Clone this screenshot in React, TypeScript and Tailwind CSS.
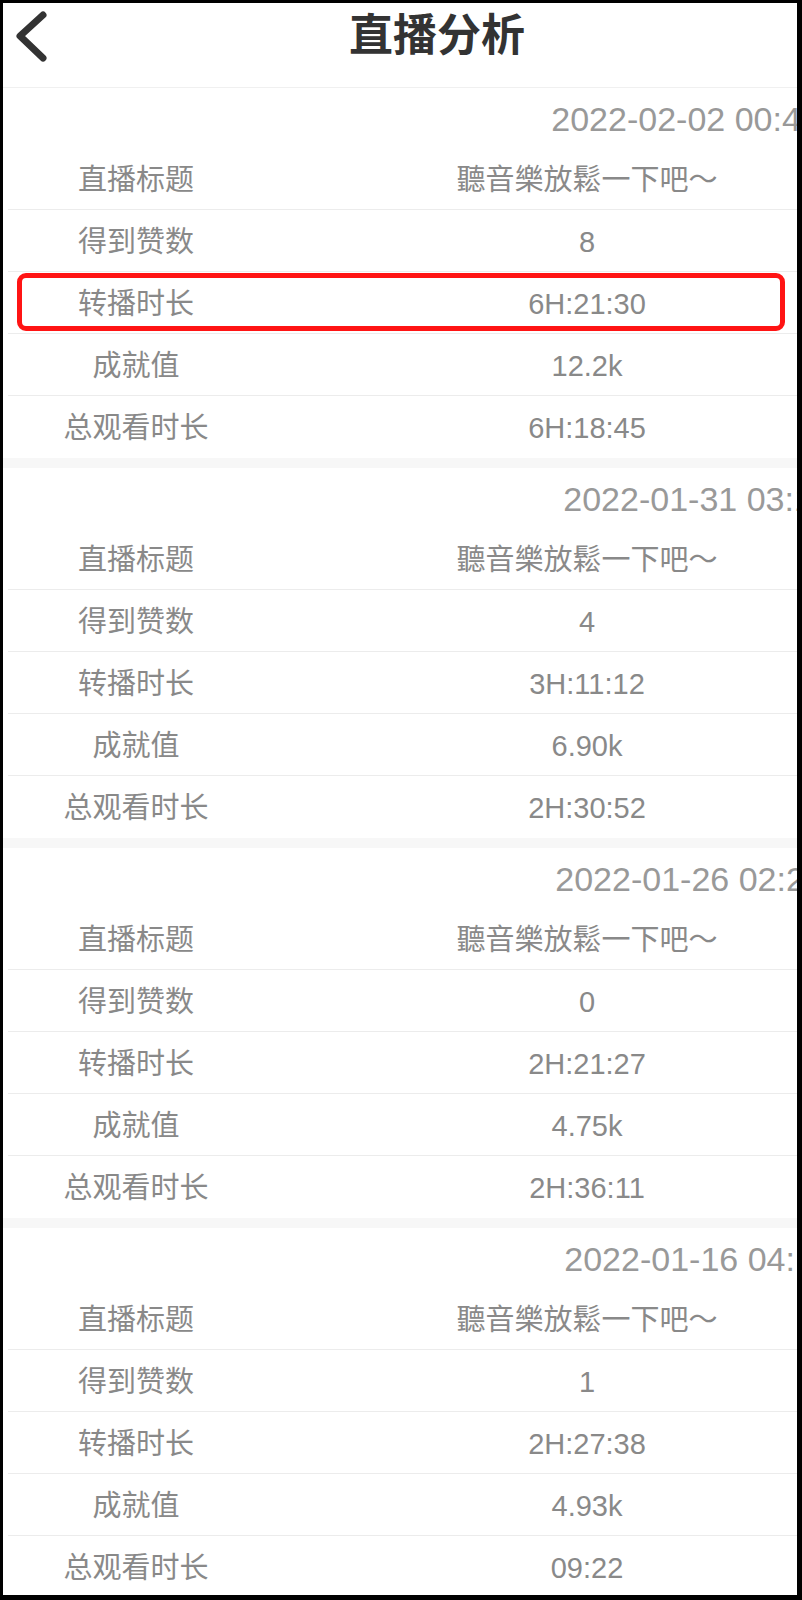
import React from 'react';

interface Session {
  date: string;
  dateShift: string;
  title: string;
  likes: string;
  relay: string;
  score: string;
  watch: string;
}

const sessions: Session[] = [
  { date: '2022-02-02 00:42:18', dateShift: '-mr-[70px]', title: '聽音樂放鬆一下吧～', likes: '8', relay: '6H:21:30', score: '12.2k', watch: '6H:18:45' },
  { date: '2022-01-31 03:15:06', dateShift: '-mr-[82px]', title: '聽音樂放鬆一下吧～', likes: '4', relay: '3H:11:12', score: '6.90k', watch: '2H:30:52' },
  { date: '2022-01-26 02:27:41', dateShift: '-mr-[74px]', title: '聽音樂放鬆一下吧～', likes: '0', relay: '2H:21:27', score: '4.75k', watch: '2H:36:11' },
  { date: '2022-01-16 04:12:55', dateShift: '-mr-[83px]', title: '聽音樂放鬆一下吧～', likes: '1', relay: '2H:27:38', score: '4.93k', watch: '09:22' },
];

const font = { fontFamily: '"Liberation Sans", "Noto Sans CJK SC", sans-serif' };

const Row: React.FC<{ label: string; value: string; last?: boolean; marked?: boolean }> = ({ label, value, last, marked }) => (
  <div className={`relative ml-[5px] flex h-[62px] items-center pt-[4px] ${last ? '' : 'border-b border-[#ececec]'}`}>
    <div className="w-[256px] shrink-0 text-center text-[29px] text-[#898989]">{label}</div>
    <div className="w-[646px] shrink-0 text-center text-[29px] text-[#898989]">{value}</div>
    {marked && (
      <div className="absolute left-[9px] top-[1px] h-[58px] w-[768px] rounded-[9px] border-[5px] border-[#ff1414]" />
    )}
  </div>
);

export default function App() {
  return (
    <div className="h-[1600px] w-[802px] bg-black pb-[5px] pl-[3px] pr-[5px] pt-[3px]" style={font}>
      <div className="h-full w-full overflow-hidden bg-white">
        <div className="flex h-[85px] items-center border-b border-[#f0f0f0] pb-[19px]">
          <svg className="ml-[9px] shrink-0" width="40" height="56" viewBox="0 0 40 56" fill="none">
            <path d="M31 7 L8 28 L31 50" stroke="#333333" strokeWidth="7" strokeLinecap="round" strokeLinejoin="round" />
          </svg>
          <span className="ml-[297px] text-[44px] font-semibold leading-none text-[#333333]">直播分析</span>
        </div>

        {sessions.map((s, i) => (
          <div key={s.date}>
            <div className="flex h-[60px] items-center justify-end pt-[2px]">
              <span className={`whitespace-nowrap text-[34px] leading-none text-[#999999] ${s.dateShift}`}>{s.date}</span>
            </div>
            <Row label="直播标题" value={s.title} />
            <Row label="得到赞数" value={s.likes} />
            <Row label="转播时长" value={s.relay} marked={i === 0} />
            <Row label="成就值" value={s.score} />
            <Row label="总观看时长" value={s.watch} last />
            <div className="h-[10px] bg-[#f7f7f7]" />
          </div>
        ))}
      </div>
    </div>
  );
}
